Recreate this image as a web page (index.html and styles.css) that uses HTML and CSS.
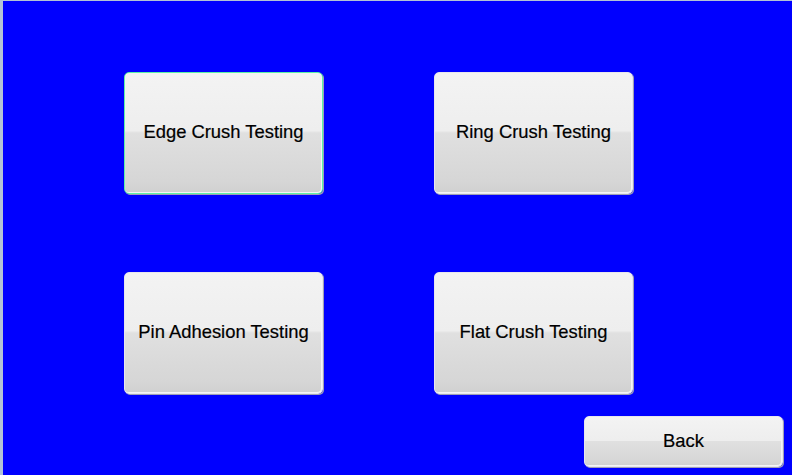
FILE: index.html
```html
<!DOCTYPE html>
<html>
<head>
<meta charset="utf-8">
<link rel="stylesheet" href="styles.css">
</head>
<body>
<div class="screen">
  <div class="grid">
    <button class="btn focused">Edge Crush Testing</button>
    <button class="btn">Ring Crush Testing</button>
    <button class="btn">Pin Adhesion Testing</button>
    <button class="btn">Flat Crush Testing</button>
  </div>
  <div class="footer">
    <button class="btn back">Back</button>
  </div>
</div>
</body>
</html>
```
FILE: styles.css
```css
html, body {
  margin: 0;
  padding: 0;
}
body {
  width: 792px;
  height: 475px;
  overflow: hidden;
  background: #0000ff;
}
.screen {
  box-sizing: border-box;
  width: 792px;
  height: 475px;
  background: #0000ff;
  border-left: 3px solid #b2c3d6;
  border-top: 1px solid #b2c3d6;
  padding: 71px 0 0 121px;
}
.grid {
  display: grid;
  grid-template-columns: 199px 199px;
  grid-template-rows: 122px 122px;
  column-gap: 111px;
  row-gap: 78px;
}
.btn {
  box-sizing: border-box;
  width: 199px;
  height: 122px;
  margin: 0;
  padding: 0 0 2px 0;
  font-family: "Liberation Sans", Arial, sans-serif;
  font-size: 18.4px;
  color: #000;
  border: 1px solid #e6e6ee;
  border-radius: 5px;
  background: linear-gradient(to bottom,
    #f3f3f3 0%,
    #eeeeee 48%,
    #e0e0e0 50%,
    #d6d6d6 90%,
    #d0d0d0 100%);
  box-shadow: 1px 1px 0 #9e9eb4, inset -1px -1px 0 #f4f4f4;
  cursor: pointer;
  -webkit-text-stroke: 0.2px #000;
}
.btn.focused {
  border: 1px solid #5cf0a8;
}
.footer {
  display: flex;
  padding: 22px 0 0 460px;
}
.btn.back {
  height: 51px;
}
```
